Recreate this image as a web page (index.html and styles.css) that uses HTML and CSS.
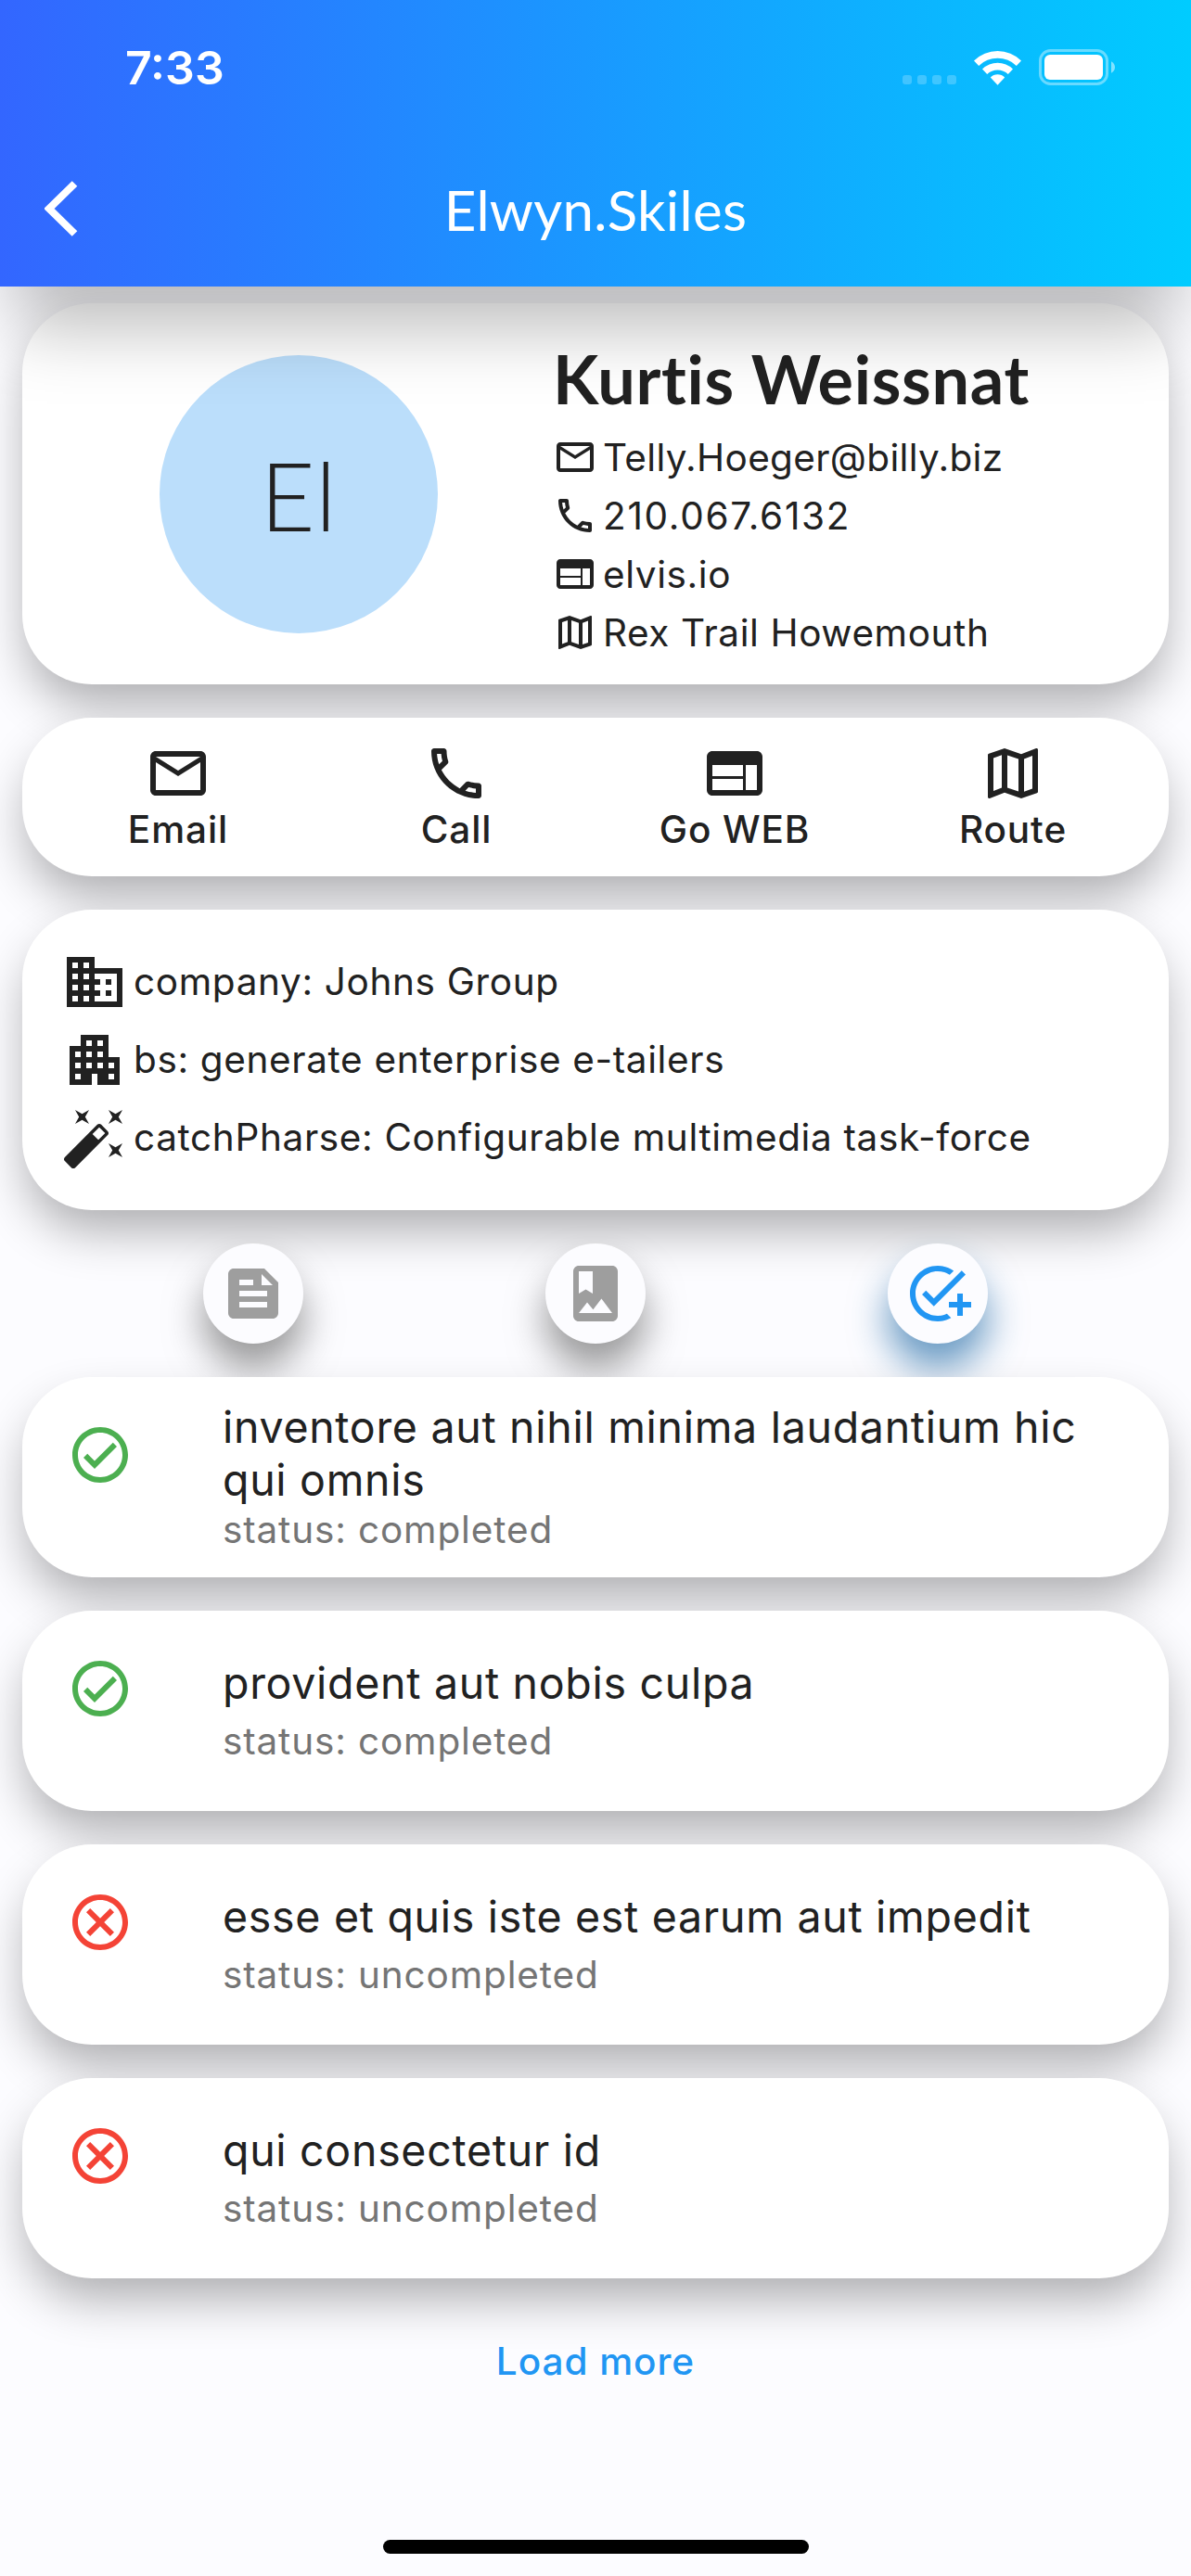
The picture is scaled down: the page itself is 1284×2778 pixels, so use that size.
FILE: index.html
```html
<!DOCTYPE html>
<html lang="en">
<head>
<meta charset="utf-8">
<title>Elwyn.Skiles</title>
<link rel="stylesheet" href="styles.css">
</head>
<body>
<svg class="defs" aria-hidden="true">
  <symbol id="mail" viewBox="0 0 24 24"><path d="M20 4H4c-1.1 0-1.99.9-1.99 2L2 18c0 1.1.9 2 2 2h16c1.1 0 2-.9 2-2V6c0-1.1-.9-2-2-2zm0 14H4V8l8 5 8-5v10zm-8-7L4 6h16l-8 5z"/></symbol>
  <symbol id="phone" viewBox="0 0 24 24"><path d="M6.54 5c.06.89.21 1.76.45 2.59l-1.2 1.2c-.41-1.2-.67-2.47-.76-3.79h1.51m9.86 12.02c.85.24 1.72.39 2.6.45v1.49c-1.32-.09-2.59-.35-3.8-.75l1.2-1.19M7.5 3H4c-.55 0-1 .45-1 1 0 9.39 7.61 17 17 17 .55 0 1-.45 1-1v-3.49c0-.55-.45-1-1-1-1.24 0-2.45-.2-3.57-.57-.1-.04-.21-.05-.31-.05-.26 0-.51.1-.71.29l-2.2 2.2c-2.83-1.45-5.15-3.76-6.59-6.59l2.2-2.2c.28-.28.36-.67.25-1.02C8.7 6.45 8.5 5.25 8.5 4c0-.55-.45-1-1-1z"/></symbol>
  <symbol id="web" viewBox="0 0 24 24"><path d="M20 4H4c-1.1 0-1.99.9-1.99 2L2 18c0 1.1.9 2 2 2h16c1.1 0 2-.9 2-2V6c0-1.1-.9-2-2-2zm-5 14H4v-4h11v4zm0-5H4V9h11v4zm5 5h-4V9h4v9z"/></symbol>
  <symbol id="map" viewBox="0 0 24 24"><path d="M20.5 3l-.16.03L15 5.1 9 3 3.36 4.9c-.21.07-.36.25-.36.48V20.5c0 .28.22.5.5.5l.16-.03L9 18.9l6 2.1 5.64-1.9c.21-.07.36-.25.36-.48V3.5c0-.28-.22-.5-.5-.5zM10 5.47l4 1.4v11.66l-4-1.4V5.47zm-5 .99l3-1.01v11.7l-3 1.16V6.46zm14 11.08l-3 1.01V6.86l3-1.16v11.84z"/></symbol>
  <symbol id="business" viewBox="0 0 24 24"><path d="M12 7V3H2v18h20V7H12zM6 19H4v-2h2v2zm0-4H4v-2h2v2zm0-4H4V9h2v2zm0-4H4V5h2v2zm4 12H8v-2h2v2zm0-4H8v-2h2v2zm0-4H8V9h2v2zm0-4H8V5h2v2zm10 12h-8v-2h2v-2h-2v-2h2v-2h-2V9h8v10zm-2-8h-2v2h2v-2zm0 4h-2v2h2v-2z"/></symbol>
  <symbol id="apartment" viewBox="0 0 24 24"><path d="M17 11V3H7v4H3v14h8v-4h2v4h8V11H17zM7 19H5v-2h2V19zM7 15H5v-2h2V15zM7 11H5V9h2V11zM11 15H9v-2h2V15zM11 11H9V9h2V11zM11 7H9V5h2V7zM15 15h-2v-2h2V15zM15 11h-2V9h2V11zM15 7h-2V5h2V7zM19 19h-2v-2h2V19zM19 15h-2v-2h2V15z"/></symbol>
  <symbol id="wand" viewBox="0 0 24 24"><path d="M7.5,5.6L5,7L6.4,4.5L5,2L7.5,3.4L10,2L8.6,4.5L10,7L7.5,5.6M19.5,15.4L22,14L20.6,16.5L22,19L19.5,17.6L17,19L18.4,16.5L17,14L19.5,15.4M22,2L20.6,4.5L22,7L19.5,5.6L17,7L18.4,4.5L17,2L19.5,3.4L22,2M13.34,12.78L15.78,10.34L13.66,8.22L11.22,10.66L13.34,12.78M14.37,7.29L16.71,9.63C17.1,10 17.1,10.65 16.71,11.04L5.04,22.71C4.65,23.1 4,23.1 3.63,22.71L1.29,20.37C0.9,20 0.9,19.35 1.29,18.96L12.96,7.29C13.35,6.9 14,6.9 14.37,7.29Z"/></symbol>
  <symbol id="feed" viewBox="0 0 24 24"><path d="M16 3H5c-1.1 0-2 .9-2 2v14c0 1.1.9 2 2 2h14c1.1 0 2-.9 2-2V8l-5-5zM7 7h5v2H7V7zm10 10H7v-2h10v2zm0-4H7v-2h10v2zm-2-4V5l4 4h-4z"/></symbol>
  <symbol id="album" viewBox="0 0 24 24"><path d="M18 2H6c-1.1 0-2 .9-2 2v16c0 1.1.9 2 2 2h12c1.1 0 2-.9 2-2V4c0-1.1-.9-2-2-2zM6 4h5v8l-2.5-1.5L6 12V4zm0 15l3-3.86 2.14 2.58 3-3.86L18 19H6z"/></symbol>
  <symbol id="task" viewBox="0 0 24 24"><path d="M22 5.18L10.59 16.6l-4.24-4.24l1.41-1.41l2.83 2.83l10-10L22 5.18zM12 20c-4.41 0-8-3.59-8-8s3.59-8 8-8c1.57 0 3.04.46 4.28 1.25l1.45-1.45C16.1 2.67 14.13 2 12 2C6.48 2 2 6.48 2 12s4.48 10 10 10c1.73 0 3.36-.44 4.78-1.22l-1.5-1.5C14.28 19.74 13.17 20 12 20zM19 15h-3v2h3v3h2v-3h3v-2h-3v-3h-2V15z"/></symbol>
  <symbol id="check" viewBox="0 0 24 24"><path d="M12 2C6.5 2 2 6.5 2 12S6.5 22 12 22 22 17.5 22 12 17.5 2 12 2M12 20C7.59 20 4 16.41 4 12S7.59 4 12 4 20 7.59 20 12 16.41 20 12 20M16.59 7.58L10 14.17L7.41 11.59L6 13L10 17L18 9L16.59 7.58Z"/></symbol>
  <symbol id="cancel" viewBox="0 0 24 24"><path d="M12 2C6.47 2 2 6.47 2 12s4.47 10 10 10 10-4.47 10-10S17.53 2 12 2zm0 18c-4.41 0-8-3.59-8-8s3.59-8 8-8 8 3.59 8 8-3.59 8-8 8zm3.59-13L12 10.59 8.41 7 7 8.41 10.59 12 7 15.59 8.41 17 12 13.41 15.59 17 17 15.59 13.41 12 17 8.41z"/></symbol>
</svg>

<header class="header">
  <div class="status">
    <span class="time">7:33</span>
    <div class="indicators">
      <span class="dots"><i></i><i></i><i></i><i></i></span>
      <svg class="wifi" viewBox="0 0 51 38" width="51" height="38">
        <path d="M0 11.5A36.5 36.5 0 0 1 51 11.5L45.8 17A29 29 0 0 0 5.2 17Z"/>
        <path d="M9 20.5A23.8 23.8 0 0 1 42 20.5L36.8 26A16.3 16.3 0 0 0 14.2 26Z"/>
        <path d="M17.8 29.5A11 11 0 0 1 33.2 29.5L25.5 37.7Z"/>
      </svg>
      <svg class="battery" viewBox="0 0 82 39" width="82" height="39">
        <rect x="1.5" y="1.5" width="72" height="36" rx="11" fill="none" stroke="#fff" stroke-opacity=".4" stroke-width="3"/>
        <rect x="6" y="6" width="63" height="27" rx="6"/>
        <path d="M78 13.200Q82 15.500 82 19.500Q82 23.500 78 25.800Z" fill-opacity=".5"/>
      </svg>
    </div>
  </div>
  <div class="appbar">
    <svg class="back" viewBox="0 0 36 60" width="36" height="60"><path d="M32.500 3L5 30L32.500 57" fill="none" stroke="#fff" stroke-width="8"/></svg>
    <h1 class="title">Elwyn.Skiles</h1>
  </div>
</header>

<main class="content">
  <section class="card profile">
    <div class="avatar">El</div>
    <div class="contact">
      <h2 class="name">Kurtis Weissnat</h2>
      <p class="line email"><svg class="icon-s"><use href="#mail"/></svg><span>Telly.Hoeger@billy.biz</span></p>
      <p class="line tel"><svg class="icon-s"><use href="#phone"/></svg><span>210.067.6132</span></p>
      <p class="line"><svg class="icon-s"><use href="#web"/></svg><span>elvis.io</span></p>
      <p class="line"><svg class="icon-s"><use href="#map"/></svg><span>Rex Trail Howemouth</span></p>
    </div>
  </section>

  <nav class="card actions">
    <a class="action"><svg class="icon"><use href="#mail"/></svg><span>Email</span></a>
    <a class="action"><svg class="icon"><use href="#phone"/></svg><span>Call</span></a>
    <a class="action"><svg class="icon"><use href="#web"/></svg><span>Go WEB</span></a>
    <a class="action"><svg class="icon"><use href="#map"/></svg><span>Route</span></a>
  </nav>

  <section class="card info">
    <p class="fact"><svg class="icon"><use href="#business"/></svg><span>company: Johns Group</span></p>
    <p class="fact"><svg class="icon"><use href="#apartment"/></svg><span>bs: generate enterprise e-tailers</span></p>
    <p class="fact"><svg class="icon"><use href="#wand"/></svg><span>catchPharse: Configurable multimedia task-force</span></p>
  </section>

  <div class="tabs">
    <span class="tab"><svg class="icon"><use href="#feed"/></svg></span>
    <span class="tab"><svg class="icon"><use href="#album"/></svg></span>
    <span class="tab active"><svg class="icon"><use href="#task"/></svg></span>
  </div>

  <ul class="todos">
    <li class="card todo tight">
      <svg class="icon done"><use href="#check"/></svg>
      <div class="todo-text"><p class="todo-title">inventore aut nihil minima laudantium hic qui omnis</p><p class="todo-status">status: completed</p></div>
    </li>
    <li class="card todo">
      <svg class="icon done"><use href="#check"/></svg>
      <div class="todo-text"><p class="todo-title">provident aut nobis culpa</p><p class="todo-status">status: completed</p></div>
    </li>
    <li class="card todo">
      <svg class="icon open"><use href="#cancel"/></svg>
      <div class="todo-text"><p class="todo-title">esse et quis iste est earum aut impedit</p><p class="todo-status">status: uncompleted</p></div>
    </li>
    <li class="card todo">
      <svg class="icon open"><use href="#cancel"/></svg>
      <div class="todo-text"><p class="todo-title">qui consectetur id</p><p class="todo-status">status: uncompleted</p></div>
    </li>
  </ul>
  <a class="more">Load more</a>
</main>
<div class="home-bar"></div>
</body>
</html>
```
FILE: styles.css
```css
* { box-sizing: border-box; margin: 0; padding: 0; }

body {
  width: 1284px;
  height: 2778px;
  display: flex;
  flex-direction: column;
  overflow: hidden;
  background: #fcfcff;
  color: #212121;
  font-family: Inter, "Liberation Sans", sans-serif;
  font-size: 40.5px;
}

.defs { display: none; }
svg { flex: none; fill: currentColor; }
.icon { width: 72px; height: 72px; }
.icon-s { width: 48px; height: 48px; }

/* Header */
.header {
  position: relative;
  z-index: 1;
  height: 309px;
  flex: none;
  color: #fff;
  background: linear-gradient(90deg, #36f, #0cf);
  box-shadow: 0 60px 72px -15px rgba(0, 0, 0, .26);
}
.status {
  height: 141px;
  padding: 0 82px 0 135px;
  display: flex;
  justify-content: space-between;
}
.time {
  padding-top: 43px;
  line-height: 60px;
  font-size: 50px;
  font-weight: 600;
}
.indicators { display: flex; padding-top: 53px; }
.dots { display: flex; gap: 6px; padding-top: 28px; margin-right: 19px; }
.dots i { width: 10px; height: 10px; border-radius: 3px; background: rgba(255, 255, 255, .22); }
.wifi { margin: 1px 19px 0 0; }
.appbar {
  height: 168px;
  display: grid;
  grid-template-columns: 168px 1fr 168px;
  align-items: center;
}
.back { margin: 0 0 0 48px; }
.title {
  padding-top: 1px;
  text-align: center;
  font: 400 60px/72px Lato, sans-serif;
  letter-spacing: .3px;
}

/* Cards */
.content { padding: 18px 24px 0; display: flex; flex-direction: column; }
.card {
  background: #fff;
  border-radius: 75px;
  box-shadow: 0 27px 52px -5px rgba(0, 0, 0, .315);
}

.profile {
  height: 411px;
  padding: 0 24px;
  display: grid;
  grid-template-columns: 548px 1fr;
  align-items: center;
}
.avatar {
  width: 300px;
  height: 300px;
  justify-self: center;
  border-radius: 50%;
  background: #bbdefb;
  text-align: center;
  font: 300 102px/302px Lato, sans-serif;
  letter-spacing: 1px;
}
.contact { padding-top: 13px; }
.name {
  margin-bottom: 10px;
  font: 700 72px/87px Lato, sans-serif;
  letter-spacing: .7px;
}
.line {
  height: 63px;
  display: flex;
  align-items: center;
  gap: 6px;
  letter-spacing: .6px;
}
.email { letter-spacing: .34px; }
.tel { letter-spacing: 1.7px; }

.actions {
  height: 171px;
  margin-top: 36px;
  padding: 24px 18px 0;
  display: grid;
  grid-template-columns: repeat(4, 300px);
}
.action {
  display: flex;
  flex-direction: column;
  align-items: center;
  line-height: 50px;
  font-weight: 500;
  letter-spacing: .9px;
}

.info { height: 324px; margin-top: 36px; padding: 36px 42px; }
.fact {
  height: 84px;
  display: flex;
  align-items: center;
  gap: 6px;
  letter-spacing: .64px;
}
.fact span { padding-bottom: 2px; }

/* Tabs */
.tabs {
  display: grid;
  grid-template-columns: repeat(3, 369px);
  justify-content: center;
  justify-items: center;
  padding: 36px 0;
}
.tab {
  width: 108px;
  height: 108px;
  display: grid;
  place-items: center;
  border-radius: 50%;
  color: #9e9e9e;
  background: #fcfcff;
  box-shadow: 0 27px 40px rgba(98, 98, 98, .65);
}
.tab.active { color: #2196f3; box-shadow: 0 27px 40px rgba(26, 101, 163, .65); }

/* Todo list */
.todos { position: relative; list-style: none; display: flex; flex-direction: column; gap: 36px; }
.todo { height: 216px; padding: 48px 48px 0; display: flex; gap: 96px; }
.done { color: #4caf50; }
.open { color: #f44336; }
.todo-text { flex: 1; padding-top: 2px; }
.todo-title { line-height: 57px; font-size: 46.5px; letter-spacing: .7px; }
.todo-status { padding-top: 8px; line-height: 51px; color: #757575; letter-spacing: .85px; }
.tight .todo-text { margin-top: -24px; }
.tight .todo-status { padding: 0; line-height: 49px; }

.more {
  align-self: center;
  margin-top: 64px;
  line-height: 51px;
  color: #2196f3;
  font-weight: 500;
  letter-spacing: .95px;
}
.home-bar {
  width: 459px;
  height: 15px;
  margin: auto auto 24px;
  border-radius: 8px;
  background: #000;
}
```
